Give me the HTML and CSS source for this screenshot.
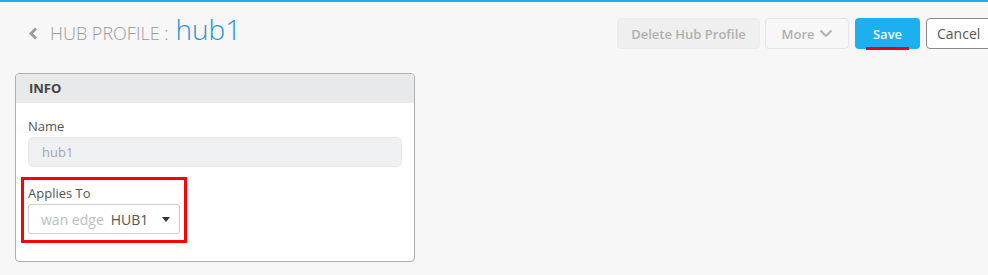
FILE: index.html
```html
<!DOCTYPE html>
<html>
<head>
<meta charset="utf-8">
<link rel="stylesheet" href="styles.css">
</head>
<body>
<div class="page">
  <header class="topbar">
    <div class="title">
      <svg class="back" width="10" height="13" viewBox="0 0 10 13"><path d="M8 1.5 L3 6.5 L8 11.5" fill="none" stroke="#9a9a9a" stroke-width="2.8"/></svg>
      <span class="crumb">HUB PROFILE :</span>
      <span class="name">hub1</span>
    </div>
    <div class="actions">
      <button class="btn btn-disabled">Delete Hub Profile</button>
      <button class="btn btn-more">More <svg width="14" height="9" viewBox="0 0 14 9"><path d="M1.5 1.5 L7 7 L12.5 1.5" fill="none" stroke="#b0b0b0" stroke-width="1.8"/></svg></button>
      <button class="btn btn-save">Save<span class="mark"></span></button>
      <button class="btn btn-cancel">Cancel</button>
    </div>
  </header>

  <section class="panel">
    <div class="panel-head">INFO</div>
    <div class="panel-body">
      <label class="lbl">Name</label>
      <div class="input">hub1</div>
      <div class="highlight">
        <label class="lbl">Applies To</label>
        <div class="select">
          <span class="ph">wan edge</span>
          <span class="val">HUB1</span>
          <span class="caret"></span>
        </div>
      </div>
    </div>
  </section>
</div>
</body>
</html>
```

FILE: styles.css
```css
html, body {
  margin: 0;
  padding: 0;
}
body {
  background: #f7f7f7;
  font-family: "Open Sans", "Noto Sans", sans-serif;
  overflow: hidden;
  width: 988px;
  height: 275px;
}
.page {
  border-top: 2px solid #1cb0ef;
}
.topbar {
  display: flex;
  align-items: flex-start;
  padding: 16px 0 0 28px;
  height: 32px;
  white-space: nowrap;
}
.title {
  width: 589px;
  flex: none;
  display: flex;
  align-items: baseline;
  height: 30px;
  margin-top: -8px;
}
.back {
  margin-right: 12px;
}
.crumb {
  color: #9a9a9a;
  font-size: 18px;
  font-weight: 300;
  margin-right: 7px;
}
.name {
  color: #1d93dc;
  font-size: 28px;
  font-weight: 300;
}
.actions {
  display: flex;
  flex: none;
  gap: 6px;
}
.btn {
  font-family: "Open Sans", "Noto Sans", sans-serif;
  font-weight: 600;
  font-size: 13px;
  height: 31px;
  border-radius: 4px;
  padding: 0 14px;
  border: 1px solid transparent;
  box-sizing: border-box;
  display: flex;
  align-items: center;
  position: relative;
}
.btn-disabled {
  background: #efefef;
  color: #b0b0b0;
  border-color: #ececec;
  width: 143px;
  justify-content: center;
  margin-right: -1px;
}
.btn-more {
  background: #f7f7f7;
  color: #b0b0b0;
  border-color: #e4e4e4;
  width: 84px;
  justify-content: center;
  gap: 4px;
}
.btn-save {
  background: #1cb0ef;
  color: #fff;
  width: 65px;
  justify-content: center;
}
.mark {
  position: absolute;
  left: 10px;
  right: 10px;
  bottom: -2px;
  height: 3px;
  background: #ee0000;
}
.btn-cancel {
  background: #fff;
  color: #555;
  border-color: #8a8a8a;
  font-weight: 500;
  font-size: 14px;
  width: 74px;
  padding: 0 10px;
}
.panel {
  margin: 23px 0 0 15px;
  width: 400px;
  height: 189px;
  box-sizing: border-box;
  border: 1px solid #aeaeae;
  border-radius: 4px;
  background: #fff;
  overflow: hidden;
}
.panel-head {
  background: #e8e9eb;
  height: 29px;
  line-height: 29px;
  padding-left: 13px;
  font-size: 13px;
  font-weight: 700;
  color: #444;
}
.panel-body {
  padding: 14px 12px 0 12px;
}
.lbl {
  display: block;
  font-size: 13px;
  line-height: 18px;
  color: #555;
  margin-bottom: 2px;
}
.input {
  height: 30px;
  box-sizing: border-box;
  background: #eff0f2;
  border: 1px solid #e5e6e8;
  border-radius: 5px;
  padding-left: 13px;
  line-height: 28px;
  font-size: 13px;
  color: #a8a8a8;
  margin-bottom: 10px;
}
.highlight {
  display: inline-block;
  border: 3px solid #ff0000;
  padding: 4px 4px 6px 4px;
  margin-left: -7px;
}
.select {
  width: 152px;
  height: 30px;
  box-sizing: border-box;
  border: 1px solid #cfcfcf;
  border-radius: 3px;
  display: flex;
  align-items: center;
  padding-left: 12px;
  font-size: 14px;
  background: #fff;
}
.ph {
  color: #bdbdbd;
  margin-right: 7px;
}
.val {
  color: #555;
}
.caret {
  margin-left: 14px;
  width: 0;
  height: 0;
  border-left: 4.5px solid transparent;
  border-right: 4.5px solid transparent;
  border-top: 5px solid #333;
}
```
